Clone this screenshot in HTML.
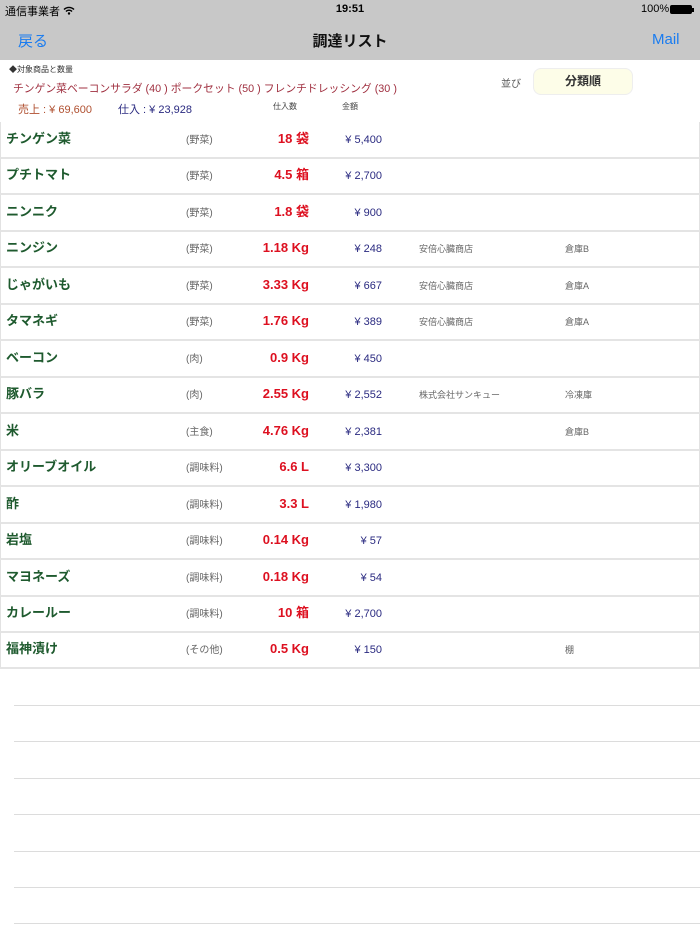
<!DOCTYPE html>
<html><head><meta charset="utf-8"><style>
*{margin:0;padding:0;box-sizing:border-box}
body{width:700px;height:934px;position:relative;background:#fff;font-family:"Liberation Sans","Noto Sans CJK JP",sans-serif;overflow:hidden}
.a{position:absolute;white-space:nowrap}
.hdr{position:absolute;left:0;top:0;width:700px;height:60px;background:#c8c8c8}
.row{position:absolute;left:0;width:700px;height:37px;border-left:1px solid #e2e2e2;border-right:1px solid #e2e2e2;border-bottom:2px solid #e4e4e4}
.row span{position:absolute;top:0;height:33px;display:flex;align-items:center;white-space:nowrap;line-height:1}
.row span.c,.row span.p,.row span.s,.row span.l{top:2px}
.n{left:5px;font-size:13px;font-weight:bold;color:#1e5a2e}
.c{left:185px;font-size:10px;color:#666}
.q{right:390px;font-size:13px;font-weight:bold;color:#dd1020}
.p{right:317px;font-size:11px;color:#2a2a80}
.s{left:418px;font-size:9px;color:#666}
.l{left:564px;font-size:9px;color:#666}
.ln{position:absolute;left:14px;width:686px;height:1px;background:#dcdcdc}
</style></head><body>
<div class="hdr"></div>
<div class="a" style="left:5px;top:3px;font-size:11px;color:#000">通信事業者 <svg width="12" height="9" viewBox="0 0 12 9" style="vertical-align:0"><path d="M1 3.5a7 7 0 0 1 10 0M3 5.5a4 4 0 0 1 6 0" stroke="#000" stroke-width="1.4" fill="none"/><circle cx="6" cy="7.5" r="1.2"/></svg></div>
<div class="a" style="left:0;width:700px;text-align:center;top:3px;font-size:11px;font-weight:bold">19:51</div>
<div class="a" style="left:641px;top:3px;font-size:11px">100%</div>
<div class="a" style="left:670px;top:5px;width:22px;height:9px;background:#000;border-radius:2px"></div>
<div class="a" style="left:692px;top:8px;width:2px;height:4px;background:#000"></div>
<div class="a" style="left:18px;top:30px;font-size:15px;color:#1a7cf0">戻る</div>
<div class="a" style="left:0;width:700px;text-align:center;top:30px;font-size:15px;font-weight:bold;color:#111">調達リスト</div>
<div class="a" style="left:652px;top:31px;font-size:15px;color:#1a7cf0">Mail</div>

<div class="a" style="left:9px;top:64px;font-size:8px;color:#333">◆対象商品と数量</div>
<div class="a" style="left:13px;top:80px;font-size:10.8px;color:#a03040">チンゲン菜ベーコンサラダ (40 )  ポークセット (50 )  フレンチドレッシング (30 )</div>
<div class="a" style="left:18px;top:101px;font-size:11px;color:#b05030">売上 : ¥ 69,600</div>
<div class="a" style="left:118px;top:101px;font-size:11px;color:#2a2a80">仕入 : ¥ 23,928</div>
<div class="a" style="left:273px;top:101px;font-size:8px;color:#444">仕入数</div>
<div class="a" style="left:342px;top:101px;font-size:8px;color:#444">金額</div>
<div class="a" style="left:501px;top:75px;font-size:10px;color:#555">並び</div>
<div class="a" style="left:533px;top:68px;width:100px;height:27px;background:#fdfde8;border:1px solid #eee;border-radius:8px;text-align:center;line-height:25px;font-size:12px;font-weight:bold;color:#333">分類順</div>

<div class="row" style="top:122px"><span class="n">チンゲン菜</span><span class="c">(野菜)</span><span class="q">18 袋</span><span class="p">¥ 5,400</span></div>
<div class="row" style="top:158px"><span class="n">プチトマト</span><span class="c">(野菜)</span><span class="q">4.5 箱</span><span class="p">¥ 2,700</span></div>
<div class="row" style="top:195px"><span class="n">ニンニク</span><span class="c">(野菜)</span><span class="q">1.8 袋</span><span class="p">¥ 900</span></div>
<div class="row" style="top:231px"><span class="n">ニンジン</span><span class="c">(野菜)</span><span class="q">1.18 Kg</span><span class="p">¥ 248</span><span class="s">安倍心臓商店</span><span class="l">倉庫B</span></div>
<div class="row" style="top:268px"><span class="n">じゃがいも</span><span class="c">(野菜)</span><span class="q">3.33 Kg</span><span class="p">¥ 667</span><span class="s">安倍心臓商店</span><span class="l">倉庫A</span></div>
<div class="row" style="top:304px"><span class="n">タマネギ</span><span class="c">(野菜)</span><span class="q">1.76 Kg</span><span class="p">¥ 389</span><span class="s">安倍心臓商店</span><span class="l">倉庫A</span></div>
<div class="row" style="top:341px"><span class="n">ベーコン</span><span class="c">(肉)</span><span class="q">0.9 Kg</span><span class="p">¥ 450</span></div>
<div class="row" style="top:377px"><span class="n">豚バラ</span><span class="c">(肉)</span><span class="q">2.55 Kg</span><span class="p">¥ 2,552</span><span class="s">株式会社サンキュー</span><span class="l">冷凍庫</span></div>
<div class="row" style="top:414px"><span class="n">米</span><span class="c">(主食)</span><span class="q">4.76 Kg</span><span class="p">¥ 2,381</span><span class="l">倉庫B</span></div>
<div class="row" style="top:450px"><span class="n">オリーブオイル</span><span class="c">(調味料)</span><span class="q">6.6 L</span><span class="p">¥ 3,300</span></div>
<div class="row" style="top:487px"><span class="n">酢</span><span class="c">(調味料)</span><span class="q">3.3 L</span><span class="p">¥ 1,980</span></div>
<div class="row" style="top:523px"><span class="n">岩塩</span><span class="c">(調味料)</span><span class="q">0.14 Kg</span><span class="p">¥ 57</span></div>
<div class="row" style="top:560px"><span class="n">マヨネーズ</span><span class="c">(調味料)</span><span class="q">0.18 Kg</span><span class="p">¥ 54</span></div>
<div class="row" style="top:596px"><span class="n">カレールー</span><span class="c">(調味料)</span><span class="q">10 箱</span><span class="p">¥ 2,700</span></div>
<div class="row" style="top:632px"><span class="n">福神漬け</span><span class="c">(その他)</span><span class="q">0.5 Kg</span><span class="p">¥ 150</span><span class="l">棚</span></div>

<div class="ln" style="top:705px"></div>
<div class="ln" style="top:741px"></div>
<div class="ln" style="top:778px"></div>
<div class="ln" style="top:814px"></div>
<div class="ln" style="top:851px"></div>
<div class="ln" style="top:887px"></div>
<div class="ln" style="top:923px"></div>
</body></html>
